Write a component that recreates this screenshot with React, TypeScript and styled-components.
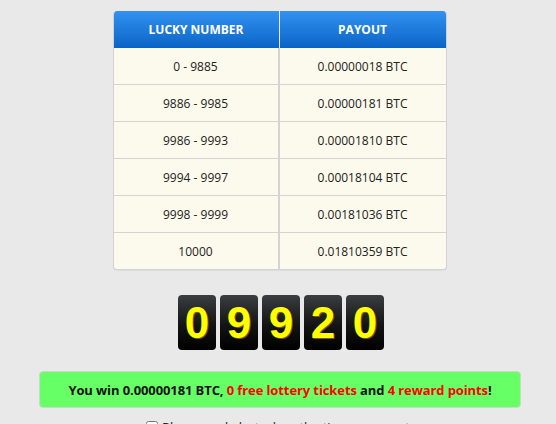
import { createGlobalStyle } from "styled-components";
import styled from "styled-components";

const GlobalStyle = createGlobalStyle`
  html, body {
    margin: 0;
    padding: 0;
    background: #e9e9e9;
    font-family: "Open Sans", "Liberation Sans", sans-serif;
    color: #222;
  }
`;

const rows = [
  ["0 - 9885", "0.00000018 BTC"],
  ["9886 - 9985", "0.00000181 BTC"],
  ["9986 - 9993", "0.00001810 BTC"],
  ["9994 - 9997", "0.00018104 BTC"],
  ["9998 - 9999", "0.00181036 BTC"],
  ["10000", "0.01810359 BTC"],
];

const digits = ["0", "9", "9", "2", "0"];

function App() {
  return (
    <>
      <GlobalStyle />
      <Page>
        <PayoutTable>
          <thead>
            <tr>
              <HeadCell>Lucky Number</HeadCell>
              <HeadCell>Payout</HeadCell>
            </tr>
          </thead>
          <tbody>
            {rows.map(([range, payout]) => (
              <tr key={range}>
                <Cell>{range}</Cell>
                <Cell>{payout}</Cell>
              </tr>
            ))}
          </tbody>
        </PayoutTable>

        <Digits>
          {digits.map((d, i) => (
            <Digit key={i}>{d}</Digit>
          ))}
        </Digits>

        <WinBox>
          You win 0.00000181 BTC, <Red>0 free lottery tickets</Red> and{" "}
          <Red>4 reward points</Red>!
        </WinBox>

        <SoundOption>
          <input type="checkbox" />
          <span>Play sound alert when the timer runs out</span>
        </SoundOption>
      </Page>
    </>
  );
}

const Page = styled.div`
  display: flex;
  flex-direction: column;
  align-items: center;
  padding-top: 11px;
`;

const PayoutTable = styled.table`
  width: 334px;
  margin-left: 3px;
  border-collapse: separate;
  border-spacing: 0;
  background: #fcfaec;
  border: 1px solid #d2d2d2;
  border-top: none;
  border-radius: 4px;
  overflow: hidden;
  font-size: 12px;
  box-shadow: 0 1px 1px rgba(0, 0, 0, 0.05);

  tr:last-child td {
    border-bottom: none;
  }

  td:last-child,
  th:last-child {
    border-right: none;
  }
`;

const HeadCell = styled.th`
  height: 37px;
  padding: 0;
  background: linear-gradient(to bottom, #3291f1 0%, #0a64c6 100%);
  color: #fff;
  font-weight: 700;
  font-size: 12px;
  text-transform: uppercase;
  border-right: 1px solid #e8f0fa;
  width: 50%;
`;

const Cell = styled.td`
  height: 36px;
  padding: 0;
  text-align: center;
  border-bottom: 1px solid #d4d4d4;
  border-right: 2px solid #d4d4d4;
  color: #222;
`;

const Digits = styled.div`
  display: flex;
  gap: 4px;
  margin-top: 25px;
  margin-left: 6px;
`;

const Digit = styled.div`
  width: 38px;
  height: 55px;
  border-radius: 4px;
  background: linear-gradient(to bottom, #3b3d40 0%, #141414 55%, #000 100%);
  color: #ffff00;
  font-family: "Liberation Sans", Arial, sans-serif;
  font-weight: 700;
  font-size: 44px;
  display: flex;
  align-items: center;
  justify-content: center;
  text-shadow: 1px 1px 0 #7a5a00;
`;

const WinBox = styled.div`
  margin-top: 21px;
  margin-left: 4px;
  width: 480px;
  height: 35px;
  background: #66ff66;
  border: 1px solid #c9d9c9;
  border-radius: 4px;
  display: flex;
  align-items: center;
  justify-content: center;
  font-weight: 700;
  font-size: 13px;
  letter-spacing: -0.1px;
  color: #111;
  white-space: pre;
`;

const Red = styled.span`
  color: #ff0000;
`;

const SoundOption = styled.label`
  display: flex;
  align-items: center;
  gap: 4px;
  margin-top: 10px;
  font-size: 13px;
  color: #222;

  input {
    margin: 0;
    width: 12px;
    height: 12px;
  }
`;

export default App;
